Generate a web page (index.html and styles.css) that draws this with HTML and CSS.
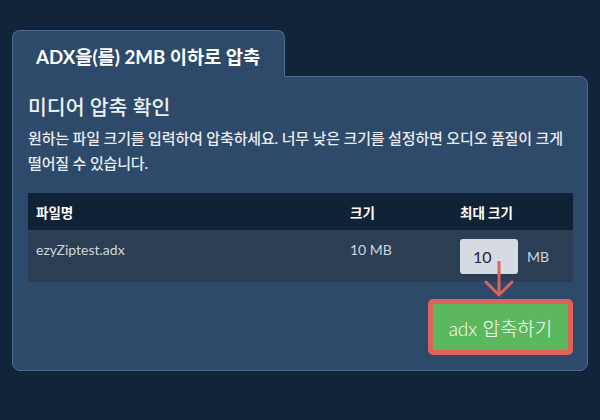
FILE: index.html
```html
<!DOCTYPE html>
<html lang="ko">
<head>
<meta charset="utf-8">
<link rel="stylesheet" href="styles.css">
</head>
<body>
<div class="wrap">
  <div class="tab">ADX을(를) 2MB 이하로 압축</div>
  <div class="card">
    <h1 class="title">미디어 압축 확인</h1>
    <p class="desc">원하는 파일 크기를 입력하여 압축하세요. 너무 낮은 크기를 설정하면 오디오 품질이 크게 떨어질 수 있습니다.</p>
    <table class="files">
      <thead>
        <tr><th class="c1">파일명</th><th class="c2">크기</th><th class="c3">최대 크기</th></tr>
      </thead>
      <tbody>
        <tr>
          <td class="c1">ezyZiptest.adx</td>
          <td class="c2">10 MB</td>
          <td class="c3"><div class="max"><span class="input">10</span><span class="unit">MB</span></div></td>
        </tr>
      </tbody>
    </table>
    <div class="actions"><button class="go">adx 압축하기</button></div>
    <svg class="arrow" width="34" height="40" viewBox="0 0 34 40">
      <path d="M17 1 V34 M4 21 L17 34 L30 21" fill="none" stroke="#e0605a" stroke-width="3" stroke-linecap="round" stroke-linejoin="round"/>
    </svg>
  </div>
</div>
</body>
</html>
```

FILE: styles.css
```css
html, body {
  margin: 0;
  padding: 0;
  background: #12243a;
  width: 600px;
  height: 420px;
  overflow: hidden;
}
body {
  font-family: Lato, "Noto Sans CJK KR", sans-serif;
  color: #e8ecf0;
}
.wrap {
  padding: 30px 0 0 12px;
}
.tab {
  position: relative;
  z-index: 2;
  box-sizing: border-box;
  width: 273px;
  height: 47px;
  margin-bottom: -1px;
  background: #2d4a6a;
  border: 1px solid #4d6b8d;
  border-bottom: none;
  border-radius: 8px 8px 0 0;
  padding: 3px 0 0 23px;
  font-size: 18.7px;
  font-weight: 700;
  line-height: 46px;
  color: #ffffff;
}
.card {
  position: relative;
  box-sizing: border-box;
  width: 576px;
  height: 295px;
  background: #2d4a6a;
  border: 1px solid #4d6b8d;
  border-radius: 0 8px 8px 8px;
  padding: 15px 14px 0 15px;
}
.title {
  margin: 0;
  font-size: 20.5px;
  font-weight: 500;
  line-height: 30px;
  color: #eceff2;
}
.desc {
  margin: 4px 0 0 0;
  font-size: 15px;
  font-weight: 500;
  line-height: 25px;
  letter-spacing: -0.15px;
  word-break: keep-all;
  color: #e8ecf0;
}
.files {
  margin-top: 17px;
  width: 545px;
  border-collapse: collapse;
  table-layout: fixed;
}
.files th {
  background: #0f2236;
  height: 37px;
  padding: 0 8px;
  text-align: left;
  font-size: 13.5px;
  font-weight: 700;
  color: #ffffff;
}
.files td {
  background: #2c3e53;
  height: 52px;
  box-sizing: border-box;
  padding: 10px 8px 0 8px;
  vertical-align: top;
  font-size: 14px;
  line-height: 20px;
  color: #cfd6de;
}
.files .c1 { width: 298px; }
.files .c2 { width: 94px; }
.files td.c3 { padding-top: 9px; }
.max {
  display: flex;
  align-items: center;
  gap: 9px;
}
.input {
  box-sizing: border-box;
  width: 58px;
  height: 35px;
  background: #d6dbe3;
  border-radius: 3px;
  padding-left: 13px;
  font-size: 16px;
  line-height: 35px;
  color: #1e2733;
}
.unit {
  font-size: 14px;
  color: #cfd6de;
}
.actions {
  display: flex;
  justify-content: flex-end;
  margin-top: 17px;
}
.go {
  box-sizing: border-box;
  width: 145px;
  height: 56px;
  background: #5cb85c;
  border: 5px solid #e0605a;
  border-radius: 5px;
  font-family: Lato, "Noto Sans CJK KR", sans-serif;
  font-size: 19px;
  font-weight: 300;
  color: #ffffff;
  padding: 0;
}
.arrow {
  position: absolute;
  left: 469px;
  top: 184px;
}
```
